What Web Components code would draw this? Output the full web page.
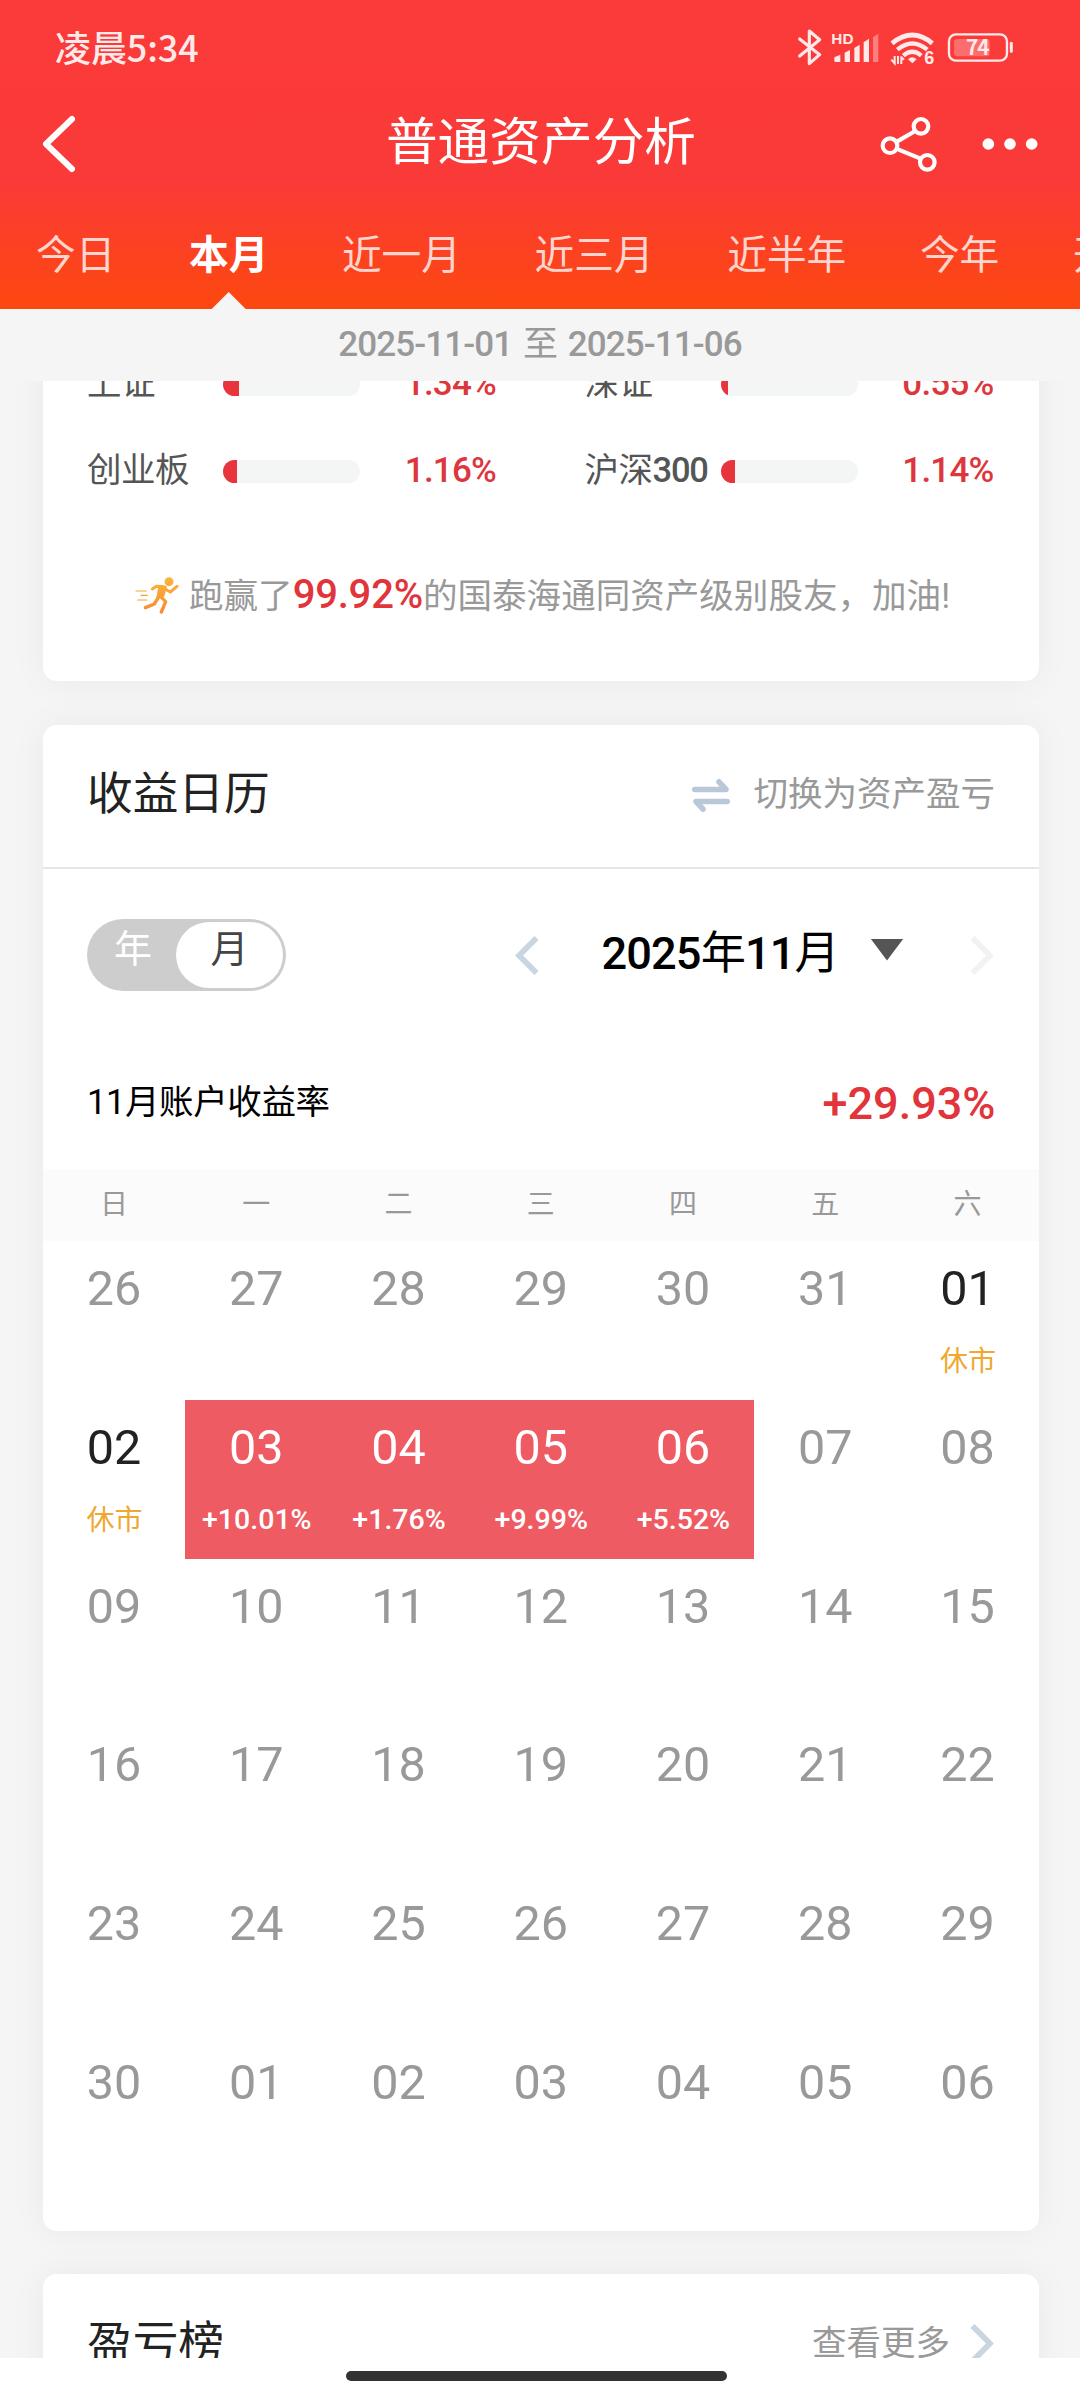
<!DOCTYPE html>
<html lang="zh-CN">
<head>
<meta charset="utf-8">
<title>普通资产分析</title>
<style>
html,body{margin:0;padding:0}
body{width:1080px;height:2400px;overflow:hidden;background:#fff;font-family:Roboto,"Noto Sans CJK SC",sans-serif;line-height:1.2}
</style>
</head>
<body>
<analysis-page></analysis-page>
<script>
function define(name, render) {
  customElements.define(name, class extends HTMLElement {
    connectedCallback() {
      if (this.shadowRoot) return;
      this.attachShadow({ mode: 'open' }).innerHTML = render(this);
    }
  });
}

// Digits are set heavier than the Chinese characters beside them.
const mixed = text => text.replace(/[\d-]+/g, run => `<em>${run}</em>`);

define('status-bar', () => `
<style>
:host{display:flex;box-sizing:border-box;height:95px;align-items:center;justify-content:space-between;padding:0 64.7px 0 55px;color:#ffe9e9}
span{font:500 36px/44px "Noto Sans CJK SC",sans-serif;margin-top:-3px;letter-spacing:-.1px}
svg{display:block}
</style>
<span>凌晨5:34</span>
<svg width="218.3" height="38.7" viewBox="50 24 655 116" fill="none" stroke="#ffe9e9">
  <path d="M58 57 L118 104 L87 131 V33 L118 59 L58 108" stroke-width="9.5" stroke-linejoin="round" stroke-linecap="round"/>
  <g fill="#ffe9e9" stroke="none">
    <text x="153" y="72" font-family="Liberation Sans,sans-serif" font-weight="700" font-size="46">HD</text>
    <path d="M162 112 L180 104 V126 H166 Q162 126 162 122Z"/>
    <path d="M193 98 L209 90 V126 H193Z"/><path d="M222 84 L238 74 V126 H222Z"/><path d="M250 67 L266 56 V126 H250Z"/>
    <path d="M278 52 L294 41 V126 H278Z" opacity=".4"/>
    <path d="M383 118 Q396 106 409 118 L396 130Z"/>
    <text x="432" y="132" font-family="Liberation Sans,sans-serif" font-weight="700" font-size="54">6</text>
  </g>
  <path d="M335 70 Q396 20 456 70" stroke-width="14"/>
  <path d="M351 89 Q396 52 441 89" stroke-width="13"/>
  <path d="M369 107 Q396 84 423 107" stroke-width="13"/>
  <path d="M333 119 L343 130 V108 M353 108 V132 M363 109 V132 M363 111 L371 119" stroke-width="6"/>
  <rect x="506" y="43" width="174" height="79" rx="21" stroke-width="7"/>
  <rect x="521" y="57" width="107" height="52" rx="9" fill="#fff" fill-opacity=".26" stroke="none"/>
  <path d="M693 70 V94" stroke-width="9" stroke-linecap="round"/>
  <text x="591" y="106" text-anchor="middle" fill="#ffe9e9" stroke="none" font-family="Noto Sans CJK SC,sans-serif" font-weight="700" font-size="63" letter-spacing="-3">74</text>
</svg>`);

define('nav-bar', () => `
<style>
:host{display:flex;box-sizing:border-box;height:92px;align-items:center;padding:6px 42px 0 42px;color:#fff}
.side{flex:1;display:flex;align-items:center}
.end{justify-content:flex-end;gap:44.7px}
h1{margin:0 0 0 2px;font:400 51.7px/62px "Noto Sans CJK SC",sans-serif;margin-top:-12px}
svg{display:block}
</style>
<div class="side"><svg width="36" height="58" viewBox="0 0 36 58" fill="none" stroke="#fff" stroke-width="6" stroke-linecap="round" stroke-linejoin="round"><path d="M30 4 L4 29 L30 54"/></svg></div>
<h1>普通资产分析</h1>
<div class="side end">
<svg width="57.3" height="56.7" viewBox="300 286 172 170" fill="none" stroke="#fff" stroke-width="12.5"><path d="M352 362 L402 333 M354 386 L420 413"/><circle cx="423" cy="317" r="22"/><circle cx="330" cy="375" r="22"/><circle cx="442" cy="425" r="22"/></svg>
<svg width="56" height="12" viewBox="606 356 168 36" fill="#fff"><circle cx="625" cy="374" r="17.5"/><circle cx="690" cy="374" r="17.5"/><circle cx="755" cy="374" r="17.5"/></svg>
</div>`);

define('period-tab', () => `
<style>
:host{display:flex;flex:none;flex-direction:column;justify-content:space-between;align-items:center;height:122px;color:rgba(255,255,255,.78);font:400 39.7px/48px "Noto Sans CJK SC",sans-serif;white-space:nowrap}
:host([active]){color:#fff;font-weight:700}
.t{margin-top:41px}
i{display:none;width:34px;height:17px;background:#f5f5f5;clip-path:polygon(50% 0,100% 100%,0 100%)}
:host([active]) i{display:block}
</style><span class="t"><slot></slot></span><i></i>`);

define('period-tabs', () => `
<style>:host{display:flex;height:122px;gap:73.6px;padding-left:36px;overflow:hidden}</style>
<period-tab>今日</period-tab><period-tab active>本月</period-tab><period-tab>近一月</period-tab><period-tab>近三月</period-tab><period-tab>近半年</period-tab><period-tab>今年</period-tab><period-tab>开户以来</period-tab>`);

define('date-strip', el => `
<style>:host{display:flex;height:72px;align-items:center;justify-content:center;background:#f5f5f5;color:#999;font-size:35px;letter-spacing:-.9px;word-spacing:3px}
em{font-style:normal;font-weight:500}
span{margin-top:-1px}</style><span>${mixed(el.getAttribute('range'))}</span>`);

define('index-meter', el => `
<style>
:host{display:flex;align-items:center;height:86.7px;width:409px;font-size:34.5px}
.l{width:136px;color:#555;white-space:nowrap;margin-top:-1px;letter-spacing:-.5px}
em{font-style:normal;font-weight:500;letter-spacing:-1.2px}
.b{width:137px;height:23px;border-radius:12px;background:#f4f6f6;overflow:hidden}
.b i{display:block;height:100%;background:#e8343c}
.v{flex:1;text-align:right;color:#dd373e;font-weight:500;font-size:35px;letter-spacing:-.8px;margin:0}
</style>
<span class="l">${mixed(el.getAttribute('label'))}</span><div class="b"><i style="width:${el.getAttribute('fill')}px"></i></div><span class="v">${el.getAttribute('value')}</span>`);

define('runner-icon', () => `
<style>:host{display:block;width:44px;height:37px}svg{display:block}</style>
<svg width="44" height="37" viewBox="30 36 132 111" fill="none" stroke="url(#g)" stroke-linecap="round" stroke-linejoin="round">
<defs><linearGradient id="g" gradientUnits="userSpaceOnUse" x1="0" y1="36" x2="0" y2="147"><stop offset="0" stop-color="#fbb73c"/><stop offset="1" stop-color="#f7892f"/></linearGradient></defs>
<circle cx="132" cy="50" r="13.5" fill="url(#g)" stroke="none"/>
<path d="M82 72 L94 64 L116 66" stroke-width="9"/>
<path d="M104 63 L122 66 L115 92 L98 96Z" fill="url(#g)" stroke-width="7"/>
<path d="M120 72 L136 81 L156 64" stroke-width="9"/>
<path d="M106 94 L122 110 L109 141" stroke-width="10"/>
<path d="M101 96 L88 117 L61 128" stroke-width="10"/>
<path d="M33 78 H64 M48 91 H67 M38 105 H65" stroke-width="3.6"/>
</svg>`);

define('chevron-icon', el => `
<style>:host{display:block;width:24px;height:39px}svg{display:block}</style>
<svg width="24" height="39" viewBox="0 0 24 39" fill="none" stroke="currentColor" stroke-width="5.8"><path d="${el.getAttribute('dir') === 'left' ? 'M21.5 2 L4 19.5 L21.5 37' : 'M2.5 2 L20 19.5 L2.5 37'}"/></svg>`);

define('beat-line', () => `
<style>:host{display:flex;align-items:center;justify-content:flex-start;height:162px;padding-left:47.5px;color:#999;font-size:34.55px;white-space:nowrap}
.t{margin:0 0 0 10.5px}
b{color:#e1343b;font-weight:500;font-size:40px;letter-spacing:-.2px}
</style><runner-icon></runner-icon><span class="t">跑赢了<b>99.92%</b>的国泰海通同资产级别股友，加油!</span>`);

define('app-card', () => `
<style>:host{display:block;box-sizing:border-box;width:995.5px;border-radius:14px;background:#fff;box-shadow:0 0 36px rgba(0,0,0,.05)}</style><slot></slot>`);

define('card-header', () => `
<style>
:host{display:flex;box-sizing:border-box;height:144px;align-items:center;justify-content:space-between;padding:0 43.5px 10px 44px;border-bottom:2px solid #e6e6e6}
h2{margin:0;font:400 45.7px/56px "Noto Sans CJK SC",sans-serif;color:#222;margin-top:-3px}
div{display:flex;align-items:center;color:#999;font:400 34.5px/42px "Noto Sans CJK SC",sans-serif}
</style><h2><slot name="title"></slot></h2><div><slot></slot></div>`);

define('swap-icon', () => `
<style>:host{display:block;margin:9px 24px 0 0}svg{display:block}</style>
<svg width="38" height="35" viewBox="0 0 38 35" fill="none" stroke="#b9c8d8" stroke-width="5.6" stroke-linecap="round"><path d="M2.8 11.5 H34 L27 3.8" stroke-linejoin="round"/><path d="M35.2 23.5 H4 L11 31.2" stroke-linejoin="round"/></svg>`);

define('view-toggle', () => `
<style>
:host{display:flex;box-sizing:border-box;width:199px;height:72px;padding:3px;border-radius:36px;background:#cdcdcd;font:400 38px/46px "Noto Sans CJK SC",sans-serif}
span{display:flex;justify-content:center;height:66px;box-sizing:border-box;padding-top:1px}
.y{width:86px;color:#fff}.m{width:107px;border-radius:33px;background:#fff;color:#444}
</style><span class="y">年</span><span class="m">月</span>`);

define('month-picker', () => `
<style>
:host{display:flex;align-items:center}
.p{color:#c9d6e2}.n{color:#f2f2f2}
b{width:231px;margin:-2px 38px 0 63px;font-weight:400;font-size:45.2px;line-height:54px;letter-spacing:-.9px;color:#000;white-space:nowrap}
em{font-style:normal;font-weight:500}
i{width:33px;height:22px;margin:-11px 66px 0 0;background:#555;clip-path:polygon(0 0,100% 0,50% 100%)}
</style><chevron-icon class="p" dir="left"></chevron-icon><b>${mixed('2025年11月')}</b><i></i><chevron-icon class="n"></chevron-icon>`);

define('day-cell', el => `
<style>
:host{display:flex;flex-direction:column;align-items:center;box-sizing:border-box;height:158.8px;padding-top:19px;color:#999;font-size:48.5px;line-height:58px}
:host([on]){color:#222}
:host([gain]){color:#fff;background:#ef5b62}
small{font-size:28.5px;line-height:34px;margin:26px 0 0 1px;font-weight:500;white-space:nowrap}
:host([on]) small{color:#efa830;font-weight:400;font-size:28px;margin-top:27px}
</style><span>${el.getAttribute('day')}</span>${el.hasAttribute('note') ? `<small>${el.getAttribute('note')}</small>` : ''}`);

define('profit-calendar', () => {
  const days = '26 27 28 29 30 31 01 02 03 04 05 06 07 08 09 10 11 12 13 14 15 16 17 18 19 20 21 22 23 24 25 26 27 28 29 30 01 02 03 04 05 06'.split(' ');
  const notes = { 6: '休市', 7: '休市', 8: '+10.01%', 9: '+1.76%', 10: '+9.99%', 11: '+5.52%' };
  return `
<style>
:host{display:block}
.w,.g{display:grid;grid-template-columns:repeat(7,1fr)}
.w{height:72px;align-items:center;justify-items:center;background:#fbfbfb;color:#999;font:400 28px/34px "Noto Sans CJK SC",sans-serif}
.w span{margin-top:-6px}
</style>
<div class="w">${[...'日一二三四五六'].map(d => `<span>${d}</span>`).join('')}</div>
<div class="g">${days.map((d, i) => `<day-cell day="${d}"${notes[i] ? ` note="${notes[i]}" ${i < 8 ? 'on' : 'gain'}` : ''}></day-cell>`).join('')}</div>`;
});

define('analysis-page', () => `
<style>
:host{display:flex;flex-direction:column;width:1080px;height:2400px;overflow:hidden;background:#fff}
header{flex:none;background:linear-gradient(#fb3a3a 0,#fa3a38 180px,#fd4712 300px,#fd4712)}
main{flex:none;display:flex;flex-direction:column;align-items:center;height:1977px;box-sizing:border-box;padding-left:1.5px;overflow:hidden;background:#f5f5f5}
.c1{flex:none;height:360px;margin-top:-60px;padding:20px 44.5px 0 44px}
.m{display:flex;flex-wrap:wrap;justify-content:space-between;margin-right:.5px}
.c2{flex:none;height:1506px;margin-top:44px}
.c3{flex:none;height:300px;margin-top:43px}
.tools{display:flex;justify-content:space-between;align-items:center;height:172px;box-sizing:border-box;padding:0 45px 0 44px}
.sum{display:flex;justify-content:space-between;align-items:center;height:128px;box-sizing:border-box;padding:0 43px 5px 44px;font-size:34.5px;color:#000}
.sum b{font-size:45px;font-weight:500;color:#e1343b;margin-top:2px}
.sum span{letter-spacing:-.4px;margin-top:1px}
.more{margin:7px 1px 0 20px;color:#c9d6e2}
footer{flex:1;display:flex;align-items:flex-start;justify-content:center;padding:13px 7px 0 0}
footer i{width:381px;height:10px;border-radius:5px;background:#333}
</style>
<header><status-bar></status-bar><nav-bar></nav-bar><period-tabs></period-tabs></header>
<date-strip range="2025-11-01 至 2025-11-06"></date-strip>
<main>
<app-card class="c1"><div class="m">
<index-meter label="上证" fill="16" value="1.34%"></index-meter><index-meter label="深证" fill="7" value="0.55%"></index-meter>
<index-meter label="创业板" fill="14" value="1.16%"></index-meter><index-meter label="沪深300" fill="14" value="1.14%"></index-meter>
</div><beat-line></beat-line></app-card>
<app-card class="c2">
<card-header><span slot="title">收益日历</span><swap-icon></swap-icon>切换为资产盈亏</card-header>
<div class="tools"><view-toggle></view-toggle><month-picker></month-picker></div>
<div class="sum"><span>11月账户收益率</span><b>+29.93%</b></div>
<profit-calendar></profit-calendar>
</app-card>
<app-card class="c3"><card-header><span slot="title">盈亏榜</span>查看更多<chevron-icon class="more"></chevron-icon></card-header></app-card>
</main>
<footer><i></i></footer>`);
</script>
</body>
</html>
